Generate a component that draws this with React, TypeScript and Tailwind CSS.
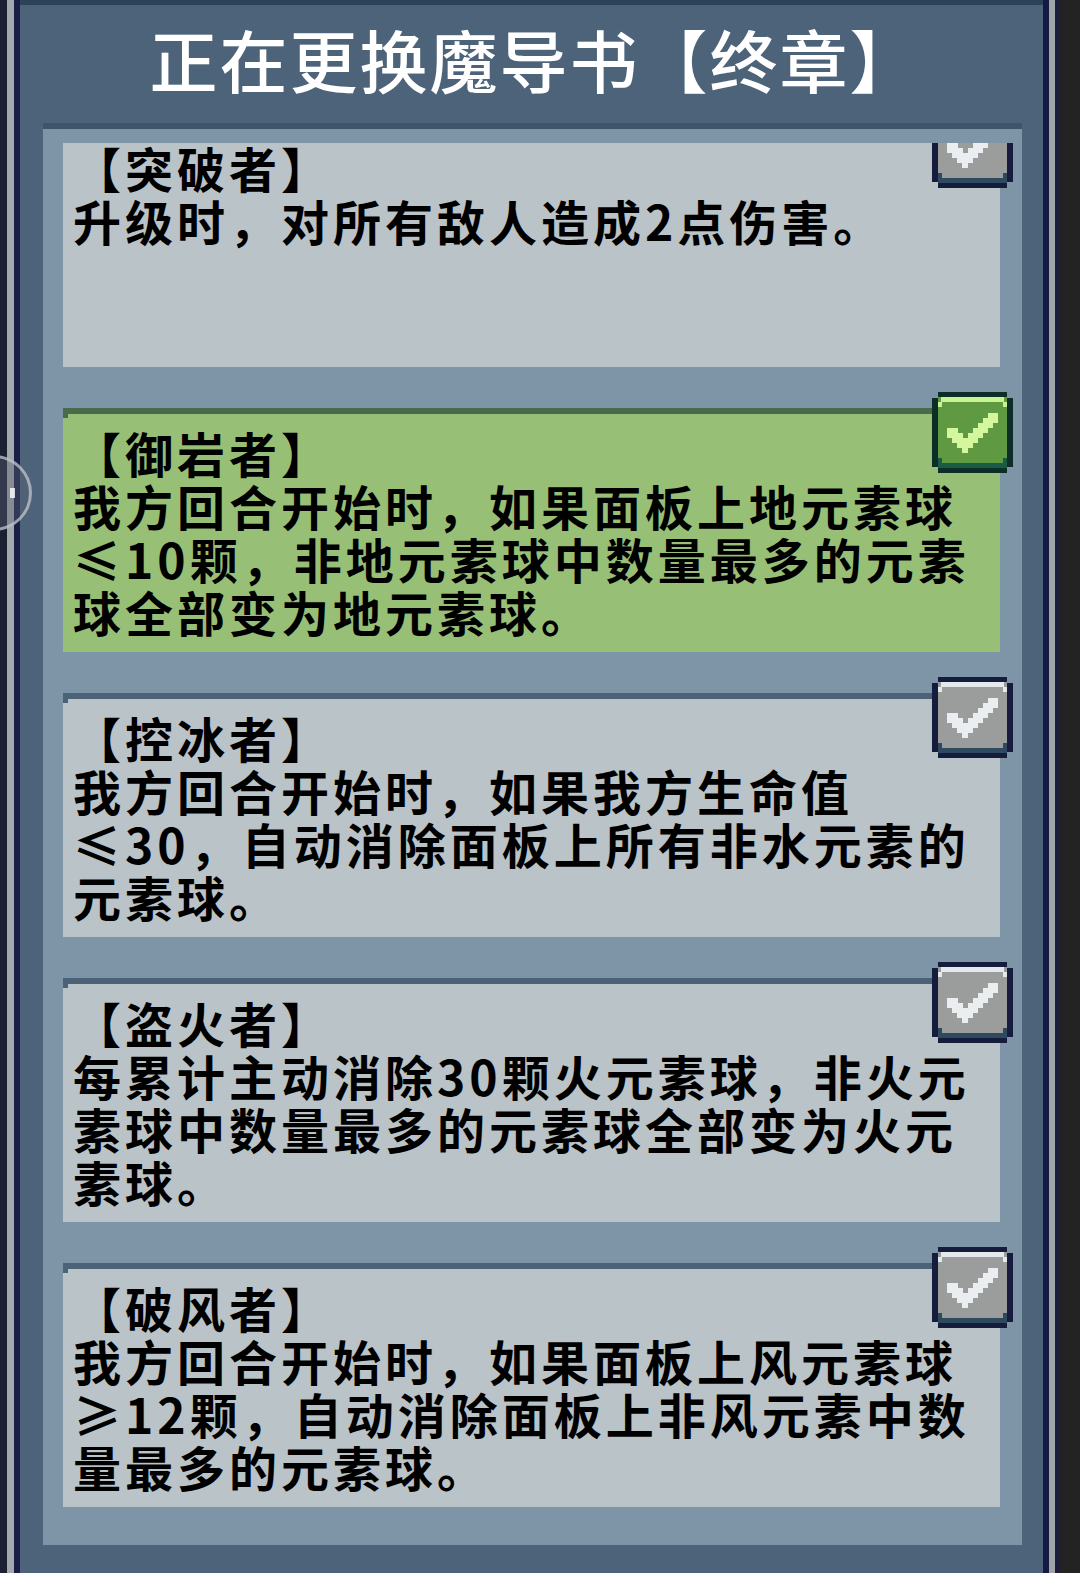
import React from 'react';

type Skill = {
  name: string;
  lines: string[];
  active?: boolean;
};

const skills: Skill[] = [
  { name: '【突破者】', lines: ['升级时，对所有敌人造成2点伤害。'] },
  {
    name: '【御岩者】',
    lines: ['我方回合开始时，如果面板上地元素球', '≤10颗，非地元素球中数量最多的元素', '球全部变为地元素球。'],
    active: true,
  },
  {
    name: '【控冰者】',
    lines: ['我方回合开始时，如果我方生命值', '≤30，自动消除面板上所有非水元素的', '元素球。'],
  },
  {
    name: '【盗火者】',
    lines: ['每累计主动消除30颗火元素球，非火元', '素球中数量最多的元素球全部变为火元', '素球。'],
  },
  {
    name: '【破风者】',
    lines: ['我方回合开始时，如果面板上风元素球', '≥12颗，自动消除面板上非风元素中数', '量最多的元素球。'],
  },
];

// pixel-art check mark, 81x80 box
const checkRects: [number, number, number, number][] = [
  [56, 21, 10, 5],
  [51, 26, 15, 5],
  [46, 31, 15, 5],
  [15, 36, 11, 5],
  [41, 36, 15, 5],
  [15, 41, 16, 5],
  [36, 41, 15, 5],
  [20, 46, 26, 5],
  [25, 51, 16, 5],
  [30, 56, 6, 5],
];

const CheckBox = ({ active }: { active?: boolean }) => {
  const c = active
    ? { edge: '#0d2e27', fill: '#5f9a43', hi: '#c9f293', lo: '#1b5a44', mark: '#d4f69c' }
    : { edge: '#151c3c', fill: '#9b9d9d', hi: '#e4e9ec', lo: '#2f4a5e', mark: '#eaeef0' };
  return (
    <svg width="81" height="81" viewBox="0 0 81 81" shapeRendering="crispEdges">
      {/* outer edge with cut corners */}
      <rect x="6" y="0" width="69" height="81" fill={c.edge} />
      <rect x="0" y="6" width="81" height="69" fill={c.edge} />
      {/* fill */}
      <rect x="6" y="5" width="69" height="71" fill={c.fill} />
      {/* top bevel */}
      <rect x="9" y="5" width="63" height="5" fill={c.hi} />
      <rect x="6" y="10" width="4" height="5" fill={c.hi} />
      <rect x="71" y="10" width="4" height="5" fill={c.hi} />
      {/* bottom bevel */}
      <rect x="9" y="71" width="63" height="5" fill={c.lo} />
      <rect x="6" y="66" width="4" height="10" fill={c.lo} />
      <rect x="71" y="66" width="4" height="10" fill={c.lo} />
      {checkRects.map(([x, y, w, h], i) => (
        <rect key={i} x={x} y={y} width={w} height={h} fill={c.mark} />
      ))}
    </svg>
  );
};

const SkillCard = ({ skill }: { skill: Skill }) => (
  <div
    className={
      skill.active
        ? 'relative h-[244px] shrink-0 border-t-[6px] border-[#4a6a4c] bg-[#98bf76] pl-[10px] pt-[12px]'
        : 'relative h-[244px] shrink-0 border-t-[6px] border-[#4c6277] bg-[#bac3c7] pl-[10px] pt-[12px]'
    }
  >
    {/* pixel corner notch */}
    <div className={skill.active ? 'absolute left-0 top-0 h-[4px] w-[5px] bg-[#4a6a4c]' : 'absolute left-0 top-0 h-[4px] w-[5px] bg-[#4c6277]'} />
    <div className="text-[48px] leading-[53px] tracking-[4px] text-black font-bold whitespace-nowrap">
      <div>{skill.name}</div>
      {skill.lines.map((l) => (
        <div key={l}>{l}</div>
      ))}
    </div>
    <div className="absolute right-[-13px] top-[-22px]">
      <CheckBox active={skill.active} />
    </div>
  </div>
);

export default function App() {
  return (
    <div className="relative flex h-[1573px] w-[1080px] overflow-hidden font-['Noto_Sans_CJK_SC',sans-serif]">
      {/* left frame */}
      <div className="w-[7px] bg-[#1b2132]" />
      <div className="w-[7px] bg-[#a3a8ac]" />
      <div className="w-[6px] bg-[#181e46]" />

      {/* main panel */}
      <div className="flex w-[1023px] flex-col bg-[#4c6379]">
        <div className="h-[5px] bg-[#2d4257]" />
        <div className="flex h-[118px] items-center justify-center pb-[10px] pl-[6px]">
          <h1 className="text-[68px] leading-none font-medium tracking-[2px] text-white">正在更换魔导书【终章】</h1>
        </div>

        <div className="ml-[23px] mr-[21px] flex h-[1422px] flex-col border-t-[6px] border-[#3e5569] bg-[#7e95a8] pt-[14px]">
          <div className="flex-1 overflow-hidden pl-[20px] pr-[22px]">
            <div className="mt-[-20px] flex flex-col gap-[41px]">
              {skills.map((s) => (
                <SkillCard key={s.name} skill={s} />
              ))}
            </div>
          </div>
        </div>
      </div>

      {/* right frame */}
      <div className="w-[6px] bg-[#141a44]" />
      <div className="w-[6px] bg-[#9ea4a8]" />
      <div className="w-[5px] bg-[#1a1e3c]" />
      <div className="flex-1 bg-[#232323]" />

      {/* floating side button, half off screen */}
      <div className="absolute left-[-44px] top-[455px] flex h-[76px] w-[76px] items-center justify-end rounded-full border-[3px] border-[#c9ccd4]/70 bg-[#5a5f70]/40 pr-[14px]">
        <div className="h-[10px] w-[5px] bg-white/80" />
      </div>
    </div>
  );
}
